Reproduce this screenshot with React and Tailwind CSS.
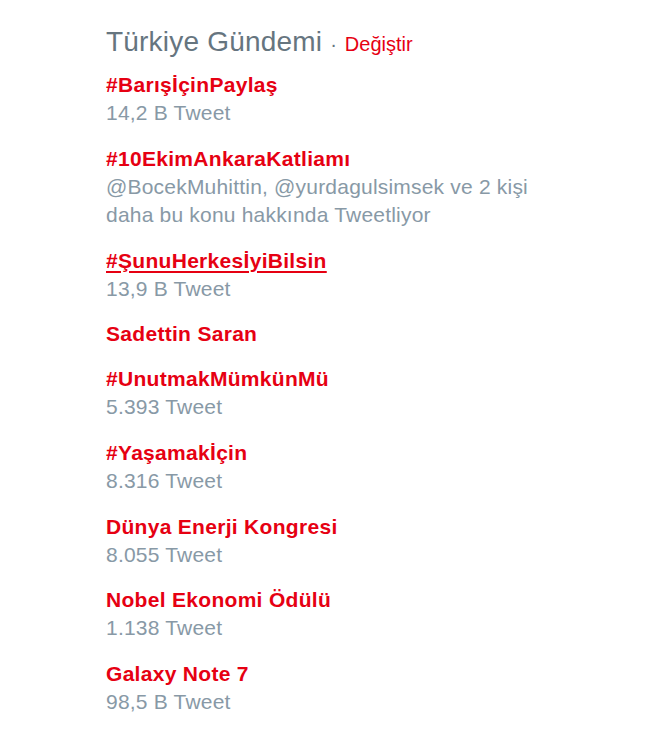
const trends = [
  { name: '#BarışİçinPaylaş', meta: ['14,2 B Tweet'] },
  {
    name: '#10EkimAnkaraKatliamı',
    meta: ['@BocekMuhittin, @yurdagulsimsek ve 2 kişi daha bu konu hakkında Tweetliyor'],
  },
  { name: '#ŞunuHerkesİyiBilsin', meta: ['13,9 B Tweet'], hover: true },
  { name: 'Sadettin Saran', meta: [] },
  { name: '#UnutmakMümkünMü', meta: ['5.393 Tweet'] },
  { name: '#Yaşamakİçin', meta: ['8.316 Tweet'] },
  { name: 'Dünya Enerji Kongresi', meta: ['8.055 Tweet'] },
  { name: 'Nobel Ekonomi Ödülü', meta: ['1.138 Tweet'] },
  { name: 'Galaxy Note 7', meta: ['98,5 B Tweet'] },
]

const App = () => {
  return (
    <div
      className="min-h-[732px] bg-white"
      style={{ fontFamily: '"Liberation Sans", Arial, sans-serif' }}
    >
      <div className="pl-[106px] pt-[23px] w-[560px]">
        {/* header */}
        <div className="flex items-baseline h-[38px]">
          <h3 className="text-[28px] leading-[38px] text-[#66757f] tracking-[0.2px]">Türkiye Gündemi</h3>
          <span className="text-[20px] text-[#66757f] ml-[8px]">·</span>
          <a className="text-[20px] text-[#e60012] ml-[8px]">Değiştir</a>
        </div>

        <ul className="flex flex-col gap-[17px] mt-[10px]">
          {trends.map((t) => (
            <li key={t.name}>
              <div
                className={
                  'text-[21px] leading-[28px] font-bold text-[#e60012] tracking-[0.3px]' +
                  (t.hover ? ' underline decoration-2 underline-offset-[3px]' : '')
                }
              >
                {t.name}
              </div>
              {t.meta.map((m) => (
                <div key={m} className="text-[21px] leading-[28.6px] text-[#8899a6] tracking-[0.2px] w-[445px]">
                  {m}
                </div>
              ))}
            </li>
          ))}
        </ul>
      </div>
    </div>
  )
}

export default App
